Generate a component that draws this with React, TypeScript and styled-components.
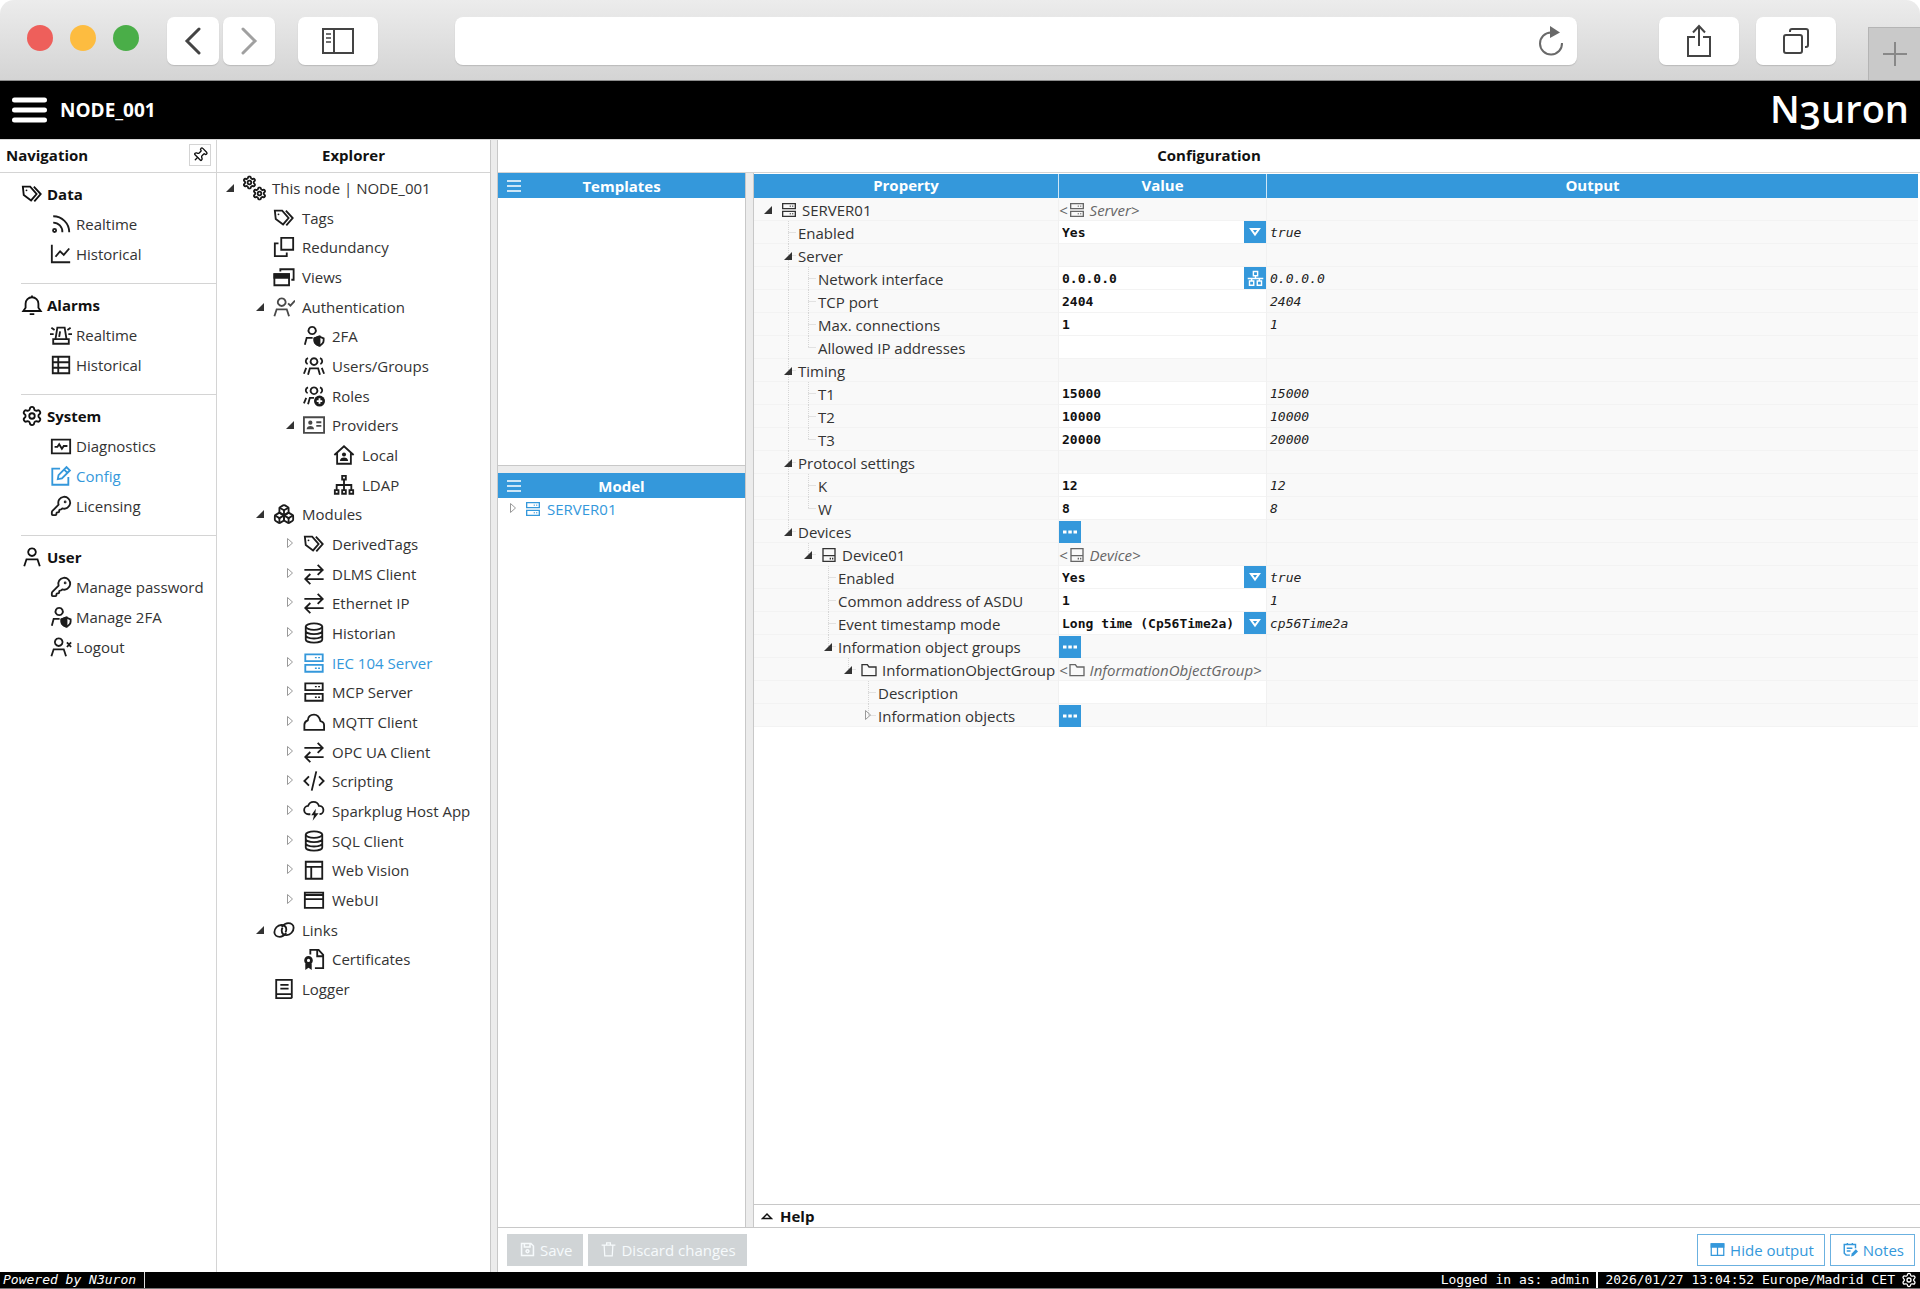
import React from 'react';
import styled, { createGlobalStyle, css } from 'styled-components';
import { Settings, KeyRound, Boxes, Pin } from 'lucide-react';

const BLUE = '#3498db';
const INK = '#1c1c1c';
const LINE = '#d4d4d4';
const SANS = '"Open Sans", "Noto Sans", sans-serif';
const MONO = '"DejaVu Sans Mono", "Liberation Mono", monospace';

const GlobalStyle = createGlobalStyle`
  *, *::before, *::after { box-sizing: border-box; }
  body { margin: 0; background: #fff; color: #333; font: 15px/20px ${SANS}; }
  button, input, select { font: inherit; color: inherit; margin: 0; padding: 0; border: 0; border-radius: 0; background: none; }
  a { color: inherit; text-decoration: none; }
  ul { list-style: none; margin: 0; padding: 0; }
  h1, h2, h3 { margin: 0; font-size: 15px; }
`;

/* ---------- icons ---------- */

const drawings: Record<string, React.ReactNode> = {
  tags: (
    <>
      <path d="M2 4h8l7 8-6 7-8-6z" />
      <path d="M14 4l7.5 8-7 8" />
      <circle cx="6" cy="8" r="1" fill="currentColor" stroke="none" />
    </>
  ),
  rss: (
    <>
      <circle cx="5" cy="19" r="1.7" />
      <path d="M3.5 10.5a10 10 0 0 1 10 10.5M3.5 3.5C13 3.5 21 11 21 21" />
    </>
  ),
  chart: <path d="M2 2v19h20M6 15l5-6 4 4 6-7" />,
  bell: <path d="M12 1.500v2M2.500 18.500h19L19 15V10.500a7 7 0 0 0-14 0V15zM9.500 22h5" />,
  siren: (
    <>
      <path d="M6 16.500L8 4h8l2 12.500M3.500 21.500v-5h17v5zM11 8l-1 6" />
      <path d="M0 11h4M20 11h4M1.500 4l3.500 2.500M22.500 4L19 6.500" />
    </>
  ),
  table: <path d="M3 3h18v18H3zM3 9h18M3 15h18M9 3v18" />,
  diagnostics: <path d="M2 5h20v15H2zM5 13h3l2-3 3 5 2-3h4" />,
  edit: <path d="M11 4H2.500v17.500H20V13M8.500 15.500l.8-4.500L18 2.300l3.700 3.700L13 14.700zM15.500 5l3.500 3.500" />,
  user: <path d="M12 2.500a4.200 4.200 0 1 0 .01 0M3.500 22l2.500-7.500h12l2.500 7.500" />,
  userShield: (
    <>
      <path d="M10 2a4 4 0 1 0 .01 0M2 21.500l2-7.500h6.500" />
      <path d="M12.500 14.500l5-2 5 2v2.500c0 3-2 4.500-5 5.500-3-1-5-2.500-5-5.500z" />
      <path d="M12.500 14.500l5.500-2v10c-3-1-5.500-2.500-5.500-5.500z" fill="currentColor" />
    </>
  ),
  userX: <path d="M9.500 2.500a4.200 4.200 0 1 0 .01 0M1.500 22l2.500-7.500h11l2.500 7.500M18.500 7l4.500 5M23 7l-4.500 5" />,
  userCheck: <path d="M9.500 2.500a4.200 4.200 0 1 0 .01 0M1.500 22l2.500-7.500h11l2.500 7.500M16.500 8l2.500 2.500L24 5" opacity=".8" />,
  users: (
    <path d="M12 3.500a3.700 3.700 0 1 0 .01 0M5.500 21.500l2-7h9l2 7M5.500 3.500a3.500 3.500 0 0 0-.5 6.500M18.500 3.500a3.500 3.500 0 0 1 .5 6.500M3.500 14L1 20.500M20.500 14l2.500 6.500" />
  ),
  roles: (
    <>
      <path d="M12 2.500a3.700 3.700 0 1 0 .01 0M5.500 21l2-7H12M5.500 2.500A3.500 3.500 0 0 0 5 9M18.500 2.500A3.500 3.500 0 0 1 19 9M3.500 14L1 20" />
      <circle cx="18" cy="17.500" r="6" fill="currentColor" stroke="none" />
      <path d="M18 14.500v6M15 17.500h6" stroke="#fff" />
    </>
  ),
  redundancy: <path d="M9 2h13v13H9zM6 8H2v14h13v-4" />,
  views: (
    <>
      <path d="M1.500 9h16v12h-16zM8 6V3.500h14.500V15H20" />
      <path d="M1.500 9h16v4h-16z" fill="currentColor" />
    </>
  ),
  idCard: (
    <g opacity=".8">
      <path d="M1 3.500h22v17H1z" />
      <circle cx="8" cy="9.500" r="2.300" fill="currentColor" stroke="none" />
      <path d="M4 16.500c0-4.500 8-4.500 8 0z" fill="currentColor" stroke="none" />
      <path d="M14.500 9H20M14.500 13H20" />
    </g>
  ),
  home: (
    <>
      <path d="M1.500 12L12 2.500 22.500 12M4.500 10v11.500h15V10" />
      <circle cx="12" cy="11.500" r="2.200" fill="currentColor" stroke="none" />
      <path d="M7.500 18.500c0-5 9-5 9 0z" fill="currentColor" stroke="none" />
    </>
  ),
  sitemap: <path d="M10 2h4v4h-4zM2 17.500h4v4H2zM10 17.500h4v4h-4zM18 17.500h4v4h-4zM12 6v11.500M4 17.500V12h16v5.500" />,
  swap: <path d="M1.500 7.500h20M16 2l5.500 5.500L16 13M22.500 17.500h-20M8 12l-5.500 5.500L8 23" />,
  database: (
    <>
      <ellipse cx="12" cy="5" rx="9" ry="3.500" />
      <path d="M3 5v14c0 2 4 3.500 9 3.500s9-1.500 9-3.500V5M3 9.700c0 2 4 3.500 9 3.500s9-1.500 9-3.500M3 14.500c0 2 4 3.500 9 3.500s9-1.500 9-3.500" />
    </>
  ),
  server: (
    <>
      <path d="M2.500 2.500h19v7.500h-19zM2.500 14h19v7.500h-19z" />
      <path d="M13 6.200h2M16.500 6.200h2M13 17.700h2M16.500 17.700h2" strokeWidth="1.500" />
    </>
  ),
  cloud: <path d="M1.500 20.500h21.500v-5c0-2.500-1.500-4-4-4.500C18 7 15.500 4 12 4c-4 0-6.500 2.500-6.800 6.200C3 11 1.500 12.500 1.500 15z" />,
  code: <path d="M6.500 7l-5 5 5 5M17.500 7l5 5-5 5M14.500 1.500l-5 21" />,
  cloudBolt: (
    <>
      <path d="M8 15.500H6a4.500 4.500 0 0 1-.5-9C6.500 3.500 8.500 2 11.500 2c3 0 5 1.500 6 4.500a4.500 4.500 0 0 1 .5 9" />
      <path d="M14 9.500l-5 7h3l-1.500 6 6.500-8h-3.500z" fill="currentColor" stroke="none" />
    </>
  ),
  layout: <path d="M3 3h18v18.500H3zM3 8.500h18M9 8.500V21" />,
  browser: <path d="M2 4h20v16.500H2zM2 6.500h20M2 11h20" />,
  link: (
    <>
      <path d="M14.500 15.500c-2 2.200-4.500 4-7 4-3.500 0-6-2-6-5 0-4 3.500-8 7.500-8 3.500 0 5.500 2 5.500 5 0 1-.3 2-.9 3" />
      <path d="M9.500 8.500c2-2.200 4.500-4 7-4 3.500 0 6 2 6 5 0 4-3.500 8-7.500 8-3.500 0-5.500-2-5.500-5 0-1 .3-2 .9-3" />
    </>
  ),
  certificate: (
    <>
      <path d="M8 7V2h9l5 5.500v14.500h-9M15.500 2v7H22" />
      <circle cx="6" cy="13.500" r="3.200" strokeWidth="3" />
      <path d="M2.500 17h7v7L6 21.500 2.500 24z" fill="currentColor" stroke="none" />
    </>
  ),
  book: <path d="M3.500 2h17v15.500h-17zM3.500 17.500V22h17M20.500 17.500V22M8 7.500h9M8 11.500h9" />,
  device: (
    <>
      <path d="M3 2.500h18v19H3zM3 13h18" />
      <path d="M13 17.500h2M16.500 17.500h2" strokeWidth="2.500" />
    </>
  ),
  folder: <path d="M1.500 4h8l2.500 3.500h10.500V20.500h-21z" />,
  save: <path d="M2.500 2.500h15l4 4v15h-19zM7 2.500v5.500h9V2.500M12 12.500a2.300 2.300 0 1 0 .01 0" strokeWidth="2.500" />,
  trash: <path d="M1 5h22M5 5l1 17h12l1-17M9 4V1.500h6V4" />,
  columns: (
    <>
      <path d="M2 3h20v18.500H2zM12 3v18" />
      <path d="M2 3h20v5H2z" fill="currentColor" />
    </>
  ),
  notes: (
    <>
      <path d="M11 21H5l-3-3V4h18v6M7 1.500V5M15 1.500V5M6 10h9M6 14.500h6" strokeWidth="2.300" />
      <path d="M13 23l1-4.500 6.500-7 3.500 3.500-7 7z" fill="currentColor" stroke="none" />
    </>
  ),
  network: <path d="M9 2h6v6H9zM3.500 15.500h6v6h-6zM14.500 15.500h6v6h-6zM12 8v4M1 12h22M6.500 12v3.500M17.500 12v3.500" />,
};

const Svg = styled.svg`
  display: block;
  flex: none;
  fill: none;
  stroke: currentColor;
  stroke-width: 2;
`;

function Icon({ name, size = 22 }: { name: string; size?: number }) {
  if (name === 'settings') return <Settings size={size} strokeWidth={2} aria-hidden />;
  if (name === 'key') return <KeyRound size={size} strokeWidth={2} aria-hidden />;
  if (name === 'boxes') return <Boxes size={size} strokeWidth={2} aria-hidden />;
  if (name === 'gears')
    return (
      <Svg width={size} height={size} viewBox="0 0 24 24" overflow="visible" aria-hidden>
        <Settings x="-1" y="-2" width="16" height="16" strokeWidth={3} />
        <Settings x="10" y="10" width="16" height="16" strokeWidth={3} />
      </Svg>
    );
  return (
    <Svg width={size} height={size} viewBox="0 0 24 24" aria-hidden>
      {drawings[name]}
    </Svg>
  );
}

function Arrow({ open }: { open: boolean }) {
  return open ? (
    <Svg width="10" height="10" viewBox="0 0 10 10" aria-hidden>
      <path d="M9 1v8H1z" fill="#333" stroke="none" />
    </Svg>
  ) : (
    <Svg width="10" height="14" viewBox="0 0 10 14" aria-hidden>
      <path d="M2.500 1.500v9l5-4.500z" stroke="#999" strokeWidth="1" />
    </Svg>
  );
}

/* ---------- page frame ---------- */

const Page = styled.div`
  display: flex;
  flex-direction: column;
  min-height: 100vh;
`;

const Chrome = styled.header`
  display: flex;
  align-items: flex-start;
  height: 81px;
  padding: 17px 0 0 27px;
  border-bottom: 1px solid #8c8c8c;
  border-radius: 14px 14px 0 0;
  background: linear-gradient(#ececec, #d4d4d4);
  color: #444;
`;

const Lights = styled.div`
  display: flex;
  gap: 17px;
  padding-top: 8px;
  margin-right: 28px;
`;

const Light = styled.span<{ $color: string }>`
  width: 26px;
  height: 26px;
  border-radius: 50%;
  background: ${(p) => p.$color};
`;

const ChromeButton = styled.button<{ $width: number; $gap: number }>`
  display: flex;
  align-items: center;
  justify-content: center;
  flex: none;
  width: ${(p) => p.$width}px;
  height: 48px;
  margin-right: ${(p) => p.$gap}px;
  border-radius: 7px;
  background: #fff;
  box-shadow: 0 1px 1px #bbb;
`;

const Address = styled.div`
  display: flex;
  align-items: center;
  flex: 1;
  height: 48px;
  margin: 0 82px 0 77px;
  padding: 0 12px 0 16px;
  border-radius: 8px;
  background: #fff;
  box-shadow: 0 1px 1px #bbb;
  input { flex: 1; min-width: 0; outline: none; }
`;

const NewTab = styled.button`
  align-self: flex-end;
  display: flex;
  align-items: center;
  justify-content: center;
  width: 52px;
  height: 53px;
  margin-left: 15px;
  border: solid #b4b4b4;
  border-width: 1px 0 0 1px;
  background: #c9c9c9;
  color: #888;
`;

const TitleBar = styled.div`
  display: flex;
  align-items: center;
  height: 58px;
  padding: 0 11px 0 12px;
  background: #000;
  color: #fff;
`;

const MenuButton = styled.button`
  width: 35px;
  margin-right: 13px;
`;

const NodeName = styled.h1`
  flex: 1;
  font-size: 19px;
  line-height: 28px;
  font-weight: 700;
`;

const Logo = styled.span`
  padding-bottom: 4px;
  font: 600 38px/52px ${SANS};
  font-variant-numeric: oldstyle-nums;
`;

const Body = styled.div`
  display: flex;
  flex: 1;
  border-top: 1px solid #d8d8d8;
`;

const PaneHead = styled.div<{ $center?: boolean }>`
  display: flex;
  align-items: center;
  justify-content: ${(p) => (p.$center ? 'center' : 'space-between')};
  flex: none;
  height: 33px;
  padding: ${(p) => (p.$center ? '0 0 2px' : '0 5px 2px 6px')};
  border-bottom: 1px solid ${LINE};
  color: #111;
`;

const PaneTitle = styled.h2`
  font-weight: 700;
`;

const PinButton = styled.button`
  display: flex;
  align-items: center;
  justify-content: center;
  width: 22px;
  height: 22px;
  border: 1px solid ${LINE};
  svg { transform: rotate(45deg); }
`;

/* ---------- navigation ---------- */

const Nav = styled.nav`
  width: 217px;
  flex: none;
  border-right: 1px solid ${LINE};
`;

const NavSection = styled.section`
  margin-left: 21px;
  padding: 6px 0 14px;
  & + & { border-top: 1px solid ${LINE}; }
`;

const navRow = css`
  display: flex;
  align-items: center;
  gap: 4px;
  height: 30px;
  white-space: nowrap;
`;

const NavHeading = styled.h3`
  ${navRow}
  color: #111;
  font-weight: 700;
`;

const NavLink = styled.a<{ $active?: boolean }>`
  ${navRow}
  padding-left: 29px;
  color: ${(p) => (p.$active ? BLUE : '#333')};
  svg { color: ${(p) => (p.$active ? BLUE : INK)}; }
`;

const navigation = [
  { title: 'Data', icon: 'tags', items: [['Realtime', 'rss'], ['Historical', 'chart']] },
  { title: 'Alarms', icon: 'bell', items: [['Realtime', 'siren'], ['Historical', 'table']] },
  { title: 'System', icon: 'settings', items: [['Diagnostics', 'diagnostics'], ['Config', 'edit'], ['Licensing', 'key']] },
  { title: 'User', icon: 'user', items: [['Manage password', 'key'], ['Manage 2FA', 'userShield'], ['Logout', 'userX']] },
];

/* ---------- explorer ---------- */

const Explorer = styled.section`
  width: 273px;
  flex: none;
`;

const Tree = styled.ul`
  display: grid;
  grid-auto-rows: 1fr;
  height: 831px;
`;

const TreeItem = styled.li<{ $level: number }>`
  display: flex;
  align-items: center;
  gap: 7px;
  padding-left: ${(p) => 7 + p.$level * 30}px;
`;

const Toggle = styled.button`
  display: flex;
  align-items: center;
  justify-content: center;
  flex: none;
  width: 12px;
  height: 20px;
`;

const ToggleSpace = styled.span`
  flex: none;
  width: 12px;
`;

const TreeLink = styled.a<{ $active?: boolean }>`
  display: flex;
  align-items: center;
  gap: 7px;
  white-space: nowrap;
  color: ${(p) => (p.$active ? BLUE : '#333')};
  svg { color: ${(p) => (p.$active ? BLUE : INK)}; }
`;

type Node = [level: number, label: string, icon: string, open?: boolean];

const nodes: Node[] = [
  [0, 'This node | NODE_001', 'gears', true],
  [1, 'Tags', 'tags'],
  [1, 'Redundancy', 'redundancy'],
  [1, 'Views', 'views'],
  [1, 'Authentication', 'userCheck', true],
  [2, '2FA', 'userShield'],
  [2, 'Users/Groups', 'users'],
  [2, 'Roles', 'roles'],
  [2, 'Providers', 'idCard', true],
  [3, 'Local', 'home'],
  [3, 'LDAP', 'sitemap'],
  [1, 'Modules', 'boxes', true],
  [2, 'DerivedTags', 'tags', false],
  [2, 'DLMS Client', 'swap', false],
  [2, 'Ethernet IP', 'swap', false],
  [2, 'Historian', 'database', false],
  [2, 'IEC 104 Server', 'server', false],
  [2, 'MCP Server', 'server', false],
  [2, 'MQTT Client', 'cloud', false],
  [2, 'OPC UA Client', 'swap', false],
  [2, 'Scripting', 'code', false],
  [2, 'Sparkplug Host App', 'cloudBolt', false],
  [2, 'SQL Client', 'database', false],
  [2, 'Web Vision', 'layout', false],
  [2, 'WebUI', 'browser', false],
  [1, 'Links', 'link', true],
  [2, 'Certificates', 'certificate'],
  [1, 'Logger', 'book'],
];

/* ---------- configuration ---------- */

const Splitter = styled.div<{ $size: number; $row?: boolean }>`
  flex: none;
  background: #ececec;
  border: solid #c8c8c8;
  ${(p) => (p.$row ? `height: ${p.$size}px; border-width: 1px 0 0;` : `width: ${p.$size}px; border-width: 0 1px;`)}
`;

const Config = styled.main`
  display: flex;
  flex-direction: column;
  flex: 1;
  min-width: 0;
`;

const Workspace = styled.div`
  display: flex;
  flex: 1;
`;

const SideColumn = styled.div`
  display: flex;
  flex-direction: column;
  width: 247px;
  flex: none;
`;

const SidePanel = styled.section<{ $height?: number }>`
  ${(p) => (p.$height ? `height: ${p.$height}px; flex: none;` : 'flex: 1;')}
`;

const PanelHead = styled.div`
  display: grid;
  grid-template-columns: 14px 1fr 14px;
  align-items: center;
  height: 25px;
  padding: 0 9px;
  background: ${BLUE};
  color: #fff;
  text-align: center;
`;

const ModelRow = styled.div`
  display: flex;
  align-items: center;
  gap: 6px;
  height: 22px;
  padding-left: 9px;
  color: ${BLUE};
  a { display: flex; align-items: center; gap: 6px; }
`;

const Main = styled.div`
  display: flex;
  flex-direction: column;
  flex: 1;
  min-width: 0;
`;

const TableArea = styled.div`
  flex: 1;
  padding: 1px 2px 0 0;
`;

const Table = styled.table`
  width: 100%;
  table-layout: fixed;
  border-collapse: separate;
  border-spacing: 0;
  th {
    height: 24px;
    padding: 0 0 2px;
    background: ${BLUE};
    color: #fff;
    font-weight: 700;
  }
  th + th { border-left: 1px solid #cfe6f6; }
`;

const PropertyCol = styled.col`
  width: 304px;
`;

const ValueCol = styled.col`
  width: 208px;
`;

const Cell = styled.td<{ $white?: boolean }>`
  height: 23px;
  padding: 0;
  box-shadow: inset 0 -1px #f3f3f3;
  background: ${(p) => (p.$white ? '#fff' : '#f9f9f9')};
  & + & { border-left: 1px solid #f1f1f1; }
`;

const PropertyLine = styled.div`
  display: flex;
  align-items: center;
  height: 23px;
  padding-left: 4px;
  white-space: nowrap;
  svg { flex: none; }
`;

const stem = 'repeating-linear-gradient(#d6d6d6 0 1px, transparent 1px 2px) 10px 0';
const branch = 'linear-gradient(#e2e2e2, #e2e2e2) 10px 50% / 8px 1px no-repeat';
const guides = {
  none: 'none',
  pass: `${stem} / 1px 100% no-repeat`,
  tee: `${stem} / 1px 100% no-repeat, ${branch}`,
  end: `${stem} / 1px 50% no-repeat, ${branch}`,
};

const Guide = styled.span<{ $kind: keyof typeof guides }>`
  display: flex;
  align-items: center;
  justify-content: center;
  flex: none;
  width: 20px;
  height: 23px;
  background: ${(p) => guides[p.$kind]};
`;

const Named = styled.span`
  display: flex;
  align-items: center;
  gap: 5px;
  padding-left: 3px;
`;

const TypeName = styled.span`
  display: flex;
  align-items: center;
  height: 23px;
  color: #666;
  font-style: italic;
  white-space: nowrap;
  svg { margin: 0 5px 0 1px; }
`;

const Editor = styled.div`
  display: grid;
  grid-template-columns: 1fr 22px;
  height: 23px;
`;

const fieldText = css`
  grid-row: 1;
  grid-column: 1 / 3;
  width: 100%;
  min-width: 0;
  padding-left: 3px;
  color: #111;
  font: 700 13px/23px ${MONO};
  outline: none;
`;

const Field = styled.input`
  ${fieldText}
`;

const Choice = styled.select`
  ${fieldText}
  appearance: none;
`;

const ChoiceMark = styled.span`
  grid-row: 1;
  grid-column: 2;
  display: flex;
  align-items: center;
  justify-content: center;
  height: 22px;
  background: ${BLUE};
  color: #fff;
  pointer-events: none;
`;

const SquareButton = styled.button`
  grid-row: 1;
  grid-column: 2;
  display: flex;
  align-items: center;
  justify-content: center;
  width: 22px;
  height: 22px;
  background: ${BLUE};
  color: #fff;
`;

const Output = styled.output`
  display: block;
  padding-left: 3px;
  color: #222;
  font: italic 13px/23px ${MONO};
`;

interface Row {
  level: number;
  label: string;
  icon?: string;
  open?: boolean;
  kind?: 'text' | 'select' | 'network' | 'list' | 'type';
  value?: string;
  output?: string;
}

const rows: Row[] = [
  { level: 0, label: 'SERVER01', icon: 'server', open: true, kind: 'type', value: 'Server' },
  { level: 1, label: 'Enabled', kind: 'select', value: 'Yes', output: 'true' },
  { level: 1, label: 'Server', open: true },
  { level: 2, label: 'Network interface', kind: 'network', value: '0.0.0.0', output: '0.0.0.0' },
  { level: 2, label: 'TCP port', kind: 'text', value: '2404', output: '2404' },
  { level: 2, label: 'Max. connections', kind: 'text', value: '1', output: '1' },
  { level: 2, label: 'Allowed IP addresses', kind: 'text', value: '' },
  { level: 1, label: 'Timing', open: true },
  { level: 2, label: 'T1', kind: 'text', value: '15000', output: '15000' },
  { level: 2, label: 'T2', kind: 'text', value: '10000', output: '10000' },
  { level: 2, label: 'T3', kind: 'text', value: '20000', output: '20000' },
  { level: 1, label: 'Protocol settings', open: true },
  { level: 2, label: 'K', kind: 'text', value: '12', output: '12' },
  { level: 2, label: 'W', kind: 'text', value: '8', output: '8' },
  { level: 1, label: 'Devices', open: true, kind: 'list' },
  { level: 2, label: 'Device01', icon: 'device', open: true, kind: 'type', value: 'Device' },
  { level: 3, label: 'Enabled', kind: 'select', value: 'Yes', output: 'true' },
  { level: 3, label: 'Common address of ASDU', kind: 'text', value: '1', output: '1' },
  { level: 3, label: 'Event timestamp mode', kind: 'select', value: 'Long time (Cp56Time2a)', output: 'cp56Time2a' },
  { level: 3, label: 'Information object groups', open: true, kind: 'list' },
  { level: 4, label: 'InformationObjectGroup', icon: 'folder', open: true, kind: 'type', value: 'InformationObjectGroup' },
  { level: 5, label: 'Description', kind: 'text', value: '' },
  { level: 5, label: 'Information objects', open: false, kind: 'list' },
];

function guideKind(index: number, level: number): keyof typeof guides {
  if (level === 0) return 'none';
  const next = rows.slice(index + 1).find((r) => r.level <= level);
  const continues = next !== undefined && next.level === level;
  if (rows[index].level === level) return continues ? 'tee' : 'end';
  return continues ? 'pass' : 'none';
}

function ValueEditor({ row, id }: { row: Row; id: string }) {
  switch (row.kind) {
    case 'type':
      return (
        <TypeName>
          &lt;
          <Icon name={row.icon!} size={16} />
          {row.value}&gt;
        </TypeName>
      );
    case 'list':
      return (
        <SquareButton type="button" aria-label={`Edit ${row.label}`}>
          <Svg width="14" height="4" viewBox="0 0 14 4" aria-hidden>
            <path d="M0 .5h3.500v3H0zM5.300 .5h3.500v3H5.300zM10.500 .5H14v3h-3.500z" fill="currentColor" stroke="none" />
          </Svg>
        </SquareButton>
      );
    case 'select':
      return (
        <Editor>
          <Choice id={id} defaultValue={row.value}>
            <option>{row.value}</option>
          </Choice>
          <ChoiceMark>
            <Svg width="12" height="10" viewBox="0 0 12 10" aria-hidden>
              <path d="M2 2h8L6 7.500z" />
            </Svg>
          </ChoiceMark>
        </Editor>
      );
    case 'network':
      return (
        <Editor>
          <Field id={id} defaultValue={row.value} />
          <SquareButton type="button" aria-label="Choose interface">
            <Icon name="network" size={17} />
          </SquareButton>
        </Editor>
      );
    case 'text':
      return (
        <Editor>
          <Field id={id} defaultValue={row.value} />
        </Editor>
      );
    default:
      return null;
  }
}

function PropertyRow({ row, index }: { row: Row; index: number }) {
  const id = `property-${index}`;
  const editable = row.kind === 'text' || row.kind === 'select' || row.kind === 'network';
  const levels = Array.from({ length: row.level + 1 }, (_, n) => n);
  return (
    <tr>
      <Cell>
        <PropertyLine>
          {levels.map((n) => (
            <Guide key={n} $kind={guideKind(index, n)}>
              {n === row.level && row.open !== undefined && <Arrow open={row.open} />}
            </Guide>
          ))}
          {row.icon ? (
            <Named>
              <Icon name={row.icon} size={16} />
              {row.label}
            </Named>
          ) : editable ? (
            <label htmlFor={id}>{row.label}</label>
          ) : (
            <span>{row.label}</span>
          )}
        </PropertyLine>
      </Cell>
      <Cell $white={editable}>
        <ValueEditor row={row} id={id} />
      </Cell>
      <Cell>{row.output && <Output htmlFor={id}>{row.output}</Output>}</Cell>
    </tr>
  );
}

const HelpBar = styled.button`
  display: flex;
  align-items: center;
  gap: 7px;
  height: 23px;
  padding-left: 7px;
  border-top: 1px solid #c8c8c8;
  color: #111;
  font-weight: 700;
`;

const Toolbar = styled.div`
  display: flex;
  align-items: center;
  gap: 5px;
  flex: none;
  height: 45px;
  padding: 0 5px 1px 9px;
  border-top: 1px solid #c8c8c8;
`;

const ActionButton = styled.button<{ $outlined?: boolean }>`
  display: flex;
  align-items: center;
  gap: 5px;
  height: 32px;
  padding: 0 10px 0 12px;
  background: ${(p) => (p.$outlined ? '#fff' : '#d0d4d6')};
  color: ${(p) => (p.$outlined ? BLUE : '#f6fafc')};
  border: 1px solid ${(p) => (p.$outlined ? '#6bb1e0' : '#d0d4d6')};
`;

const Spacer = styled.span`
  flex: 1;
`;

const StatusBar = styled.footer`
  display: flex;
  align-items: center;
  height: 17px;
  padding: 0 3px;
  border-bottom: 1px solid #777;
  background: #000;
  color: #fff;
  font: 13px/16px ${MONO};
`;

const Powered = styled.em`
  padding-right: 8px;
  border-right: 1px solid #ddd;
`;

const Login = styled.span`
  padding-right: 7px;
  margin-right: 7px;
  border-right: 2px solid #fff;
`;

const Clock = styled.time`
  margin-right: 6px;
`;

function MenuGlyph() {
  return (
    <Svg width="14" height="14" viewBox="0 0 14 14" aria-hidden>
      <path d="M0 2h14M0 7h14M0 12h14" strokeWidth="1.500" />
    </Svg>
  );
}

export default function App() {
  return (
    <Page>
      <GlobalStyle />
      <Chrome>
        <Lights>
          <Light $color="#ee5f5b" />
          <Light $color="#fdbc40" />
          <Light $color="#4aae48" />
        </Lights>
        <ChromeButton $width={52} $gap={4} aria-label="Back">
          <Svg width="18" height="28" viewBox="0 0 18 28">
            <path d="M15 2L3 14l12 12" strokeWidth="3" strokeLinecap="round" />
          </Svg>
        </ChromeButton>
        <ChromeButton $width={52} $gap={23} aria-label="Forward">
          <Svg width="18" height="28" viewBox="0 0 18 28" opacity=".5">
            <path d="M3 2l12 12L3 26" strokeWidth="3" strokeLinecap="round" />
          </Svg>
        </ChromeButton>
        <ChromeButton $width={80} $gap={0} aria-label="Sidebar">
          <Svg width="32" height="26" viewBox="0 0 32 26">
            <path d="M1 1h30v24H1zM12 1v24" />
            <path d="M4 6h5M4 10h5M4 14h5" strokeWidth="1.500" />
          </Svg>
        </ChromeButton>
        <Address>
          <input aria-label="Address" />
          <Svg width="28" height="32" viewBox="0 0 28 32" opacity=".8">
            <path d="M14 7.500A11 11 0 1 0 25 18" />
            <path d="M13 1l10 6.500L13 13z" fill="currentColor" stroke="none" />
          </Svg>
        </Address>
        <ChromeButton $width={80} $gap={17} aria-label="Share">
          <Svg width="26" height="34" viewBox="0 0 26 34">
            <path d="M9 13H2v19h22V13h-7M13 22V2M7 8.500L13 2l6 6.500" />
          </Svg>
        </ChromeButton>
        <ChromeButton $width={80} $gap={17} aria-label="Tabs">
          <Svg width="28" height="28" viewBox="0 0 28 28">
            <rect x="2" y="8" width="18" height="18" rx="2" />
            <path d="M8 5V4a2 2 0 0 1 2-2h14a2 2 0 0 1 2 2v14a2 2 0 0 1-2 2h-1" />
          </Svg>
        </ChromeButton>
        <NewTab aria-label="New tab">
          <Svg width="24" height="24" viewBox="0 0 24 24">
            <path d="M12 0v24M0 12h24" />
          </Svg>
        </NewTab>
      </Chrome>

      <TitleBar>
        <MenuButton aria-label="Menu">
          <Svg width="35" height="26" viewBox="0 0 35 26">
            <path d="M2.500 3h30M2.500 13h30M2.500 23h30" strokeWidth="5" strokeLinecap="round" />
          </Svg>
        </MenuButton>
        <NodeName>NODE_001</NodeName>
        <Logo>N3uron</Logo>
      </TitleBar>

      <Body>
        <Nav>
          <PaneHead>
            <PaneTitle>Navigation</PaneTitle>
            <PinButton aria-label="Pin">
              <Pin size={16} strokeWidth={2} />
            </PinButton>
          </PaneHead>
          {navigation.map((section) => (
            <NavSection key={section.title}>
              <NavHeading>
                <Icon name={section.icon} />
                {section.title}
              </NavHeading>
              {section.items.map(([label, icon]) => (
                <NavLink key={label} href="#" $active={label === 'Config'}>
                  <Icon name={icon} />
                  {label}
                </NavLink>
              ))}
            </NavSection>
          ))}
        </Nav>

        <Explorer>
          <PaneHead $center>
            <PaneTitle>Explorer</PaneTitle>
          </PaneHead>
          <Tree>
            {nodes.map(([level, label, icon, open]) => (
              <TreeItem key={label} $level={level}>
                {open === undefined ? (
                  <ToggleSpace />
                ) : (
                  <Toggle aria-label={`Toggle ${label}`} aria-expanded={open}>
                    <Arrow open={open} />
                  </Toggle>
                )}
                <TreeLink href="#" $active={label === 'IEC 104 Server'}>
                  <Icon name={icon} />
                  {label}
                </TreeLink>
              </TreeItem>
            ))}
          </Tree>
        </Explorer>

        <Splitter $size={8} />

        <Config>
          <PaneHead $center>
            <PaneTitle>Configuration</PaneTitle>
          </PaneHead>
          <Workspace>
            <SideColumn>
              <SidePanel $height={292}>
                <PanelHead>
                  <button type="button" aria-label="Templates menu"><MenuGlyph /></button>
                  <h3>Templates</h3>
                </PanelHead>
              </SidePanel>
              <Splitter $size={8} $row />
              <SidePanel>
                <PanelHead>
                  <button type="button" aria-label="Model menu"><MenuGlyph /></button>
                  <h3>Model</h3>
                </PanelHead>
                <ModelRow>
                  <Toggle aria-label="Toggle SERVER01" aria-expanded={false}>
                    <Arrow open={false} />
                  </Toggle>
                  <a href="#">
                    <Icon name="server" size={16} />
                    SERVER01
                  </a>
                </ModelRow>
              </SidePanel>
            </SideColumn>
            <Splitter $size={9} />
            <Main>
              <TableArea>
                <Table>
                  <colgroup>
                    <PropertyCol />
                    <ValueCol />
                    <col />
                  </colgroup>
                  <thead>
                    <tr>
                      <th scope="col">Property</th>
                      <th scope="col">Value</th>
                      <th scope="col">Output</th>
                    </tr>
                  </thead>
                  <tbody>
                    {rows.map((row, index) => (
                      <PropertyRow key={index} row={row} index={index} />
                    ))}
                  </tbody>
                </Table>
              </TableArea>
              <HelpBar type="button">
                <Svg width="12" height="8" viewBox="0 0 12 8" aria-hidden>
                  <path d="M1.500 6.500h9L6 2z" strokeWidth="1.500" />
                </Svg>
                Help
              </HelpBar>
            </Main>
          </Workspace>
          <Toolbar>
            <ActionButton type="button" disabled>
              <Icon name="save" size={15} />
              Save
            </ActionButton>
            <ActionButton type="button" disabled>
              <Icon name="trash" size={15} />
              Discard changes
            </ActionButton>
            <Spacer />
            <ActionButton type="button" $outlined>
              <Icon name="columns" size={15} />
              Hide output
            </ActionButton>
            <ActionButton type="button" $outlined>
              <Icon name="notes" size={15} />
              Notes
            </ActionButton>
          </Toolbar>
        </Config>
      </Body>

      <StatusBar>
        <Powered>Powered by N3uron</Powered>
        <Spacer />
        <Login>Logged in as: admin</Login>
        <Clock>2026/01/27 13:04:52 Europe/Madrid CET</Clock>
        <Icon name="settings" size={16} />
      </StatusBar>
    </Page>
  );
}
